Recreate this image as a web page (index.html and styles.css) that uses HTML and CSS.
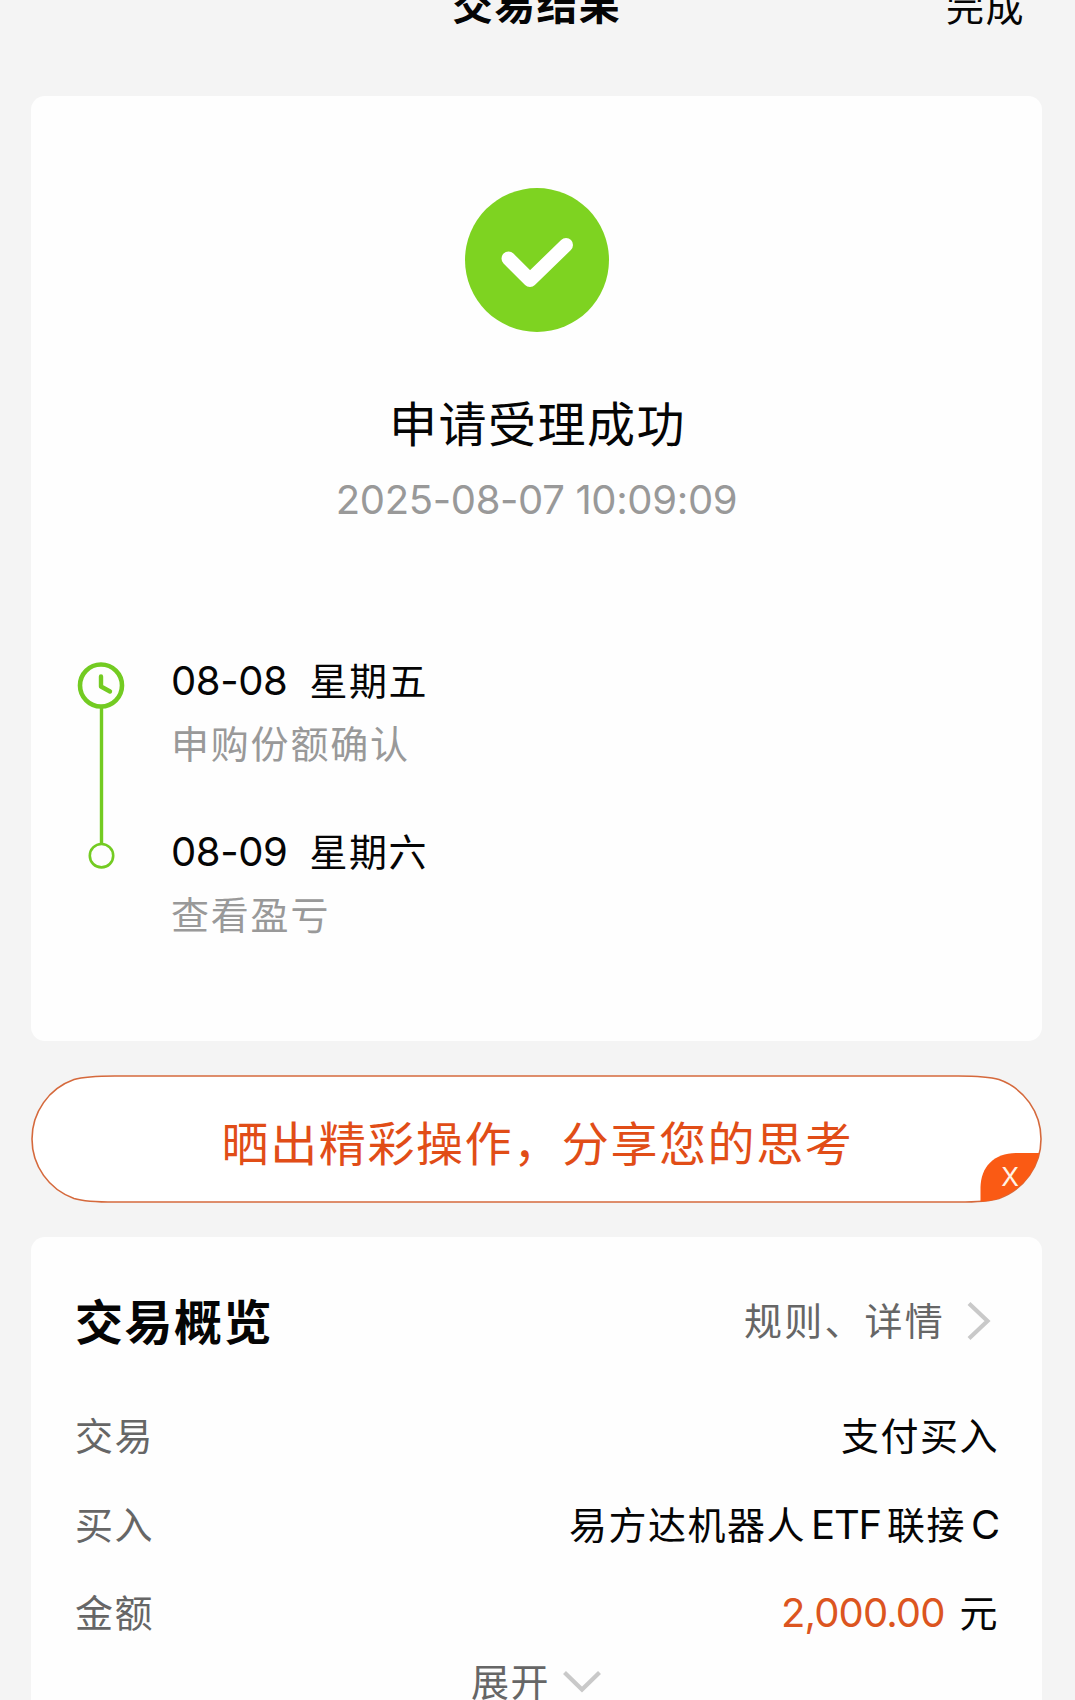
FILE: index.html
```html
<!doctype html><html lang="zh-CN">
<head><meta charset="utf-8"/><title>交易结果</title>
<meta name="viewport" content="width=device-width, initial-scale=1">
<link rel="stylesheet" href="styles.css">
</head>
<body>

<header class="nav">
	<h1>交易结果</h1>
	<a class="done">完成</a>
</header>

<section class="card result">
	<svg class="ok" width="144" height="144" viewBox="0 0 144 144">
		<circle cx="72" cy="72" r="72" fill="#7ed321"/>
		<path d="M43.5 70.5L65 92L101 57" fill="none" stroke="#fff" stroke-width="14" stroke-linecap="round" stroke-linejoin="round"/>
	</svg>
	<h2>申请受理成功</h2>
	<p class="time">2025-08-07 10:09:09</p>

	<div class="timeline">
		<svg class="axis" width="48" height="208" viewBox="0 0 48 208" fill="none" stroke="#73cb22">
			<circle cx="24" cy="23.5" r="21" stroke-width="4.6"/>
			<path d="M24 14.5V24.5L33 29.5" stroke-width="4.4" stroke-linecap="round" stroke-linejoin="round"/>
			<path d="M24.5 46V182" stroke-width="3.4"/>
			<circle cx="24.5" cy="193.7" r="11.7" stroke-width="2.6"/>
		</svg>
		<ul>
			<li>
				<p class="day"><span class="num">08-08</span>星期五</p>
				<p class="desc">申购份额确认</p>
			</li>
			<li>
				<p class="day"><span class="num">08-09</span>星期六</p>
				<p class="desc">查看盈亏</p>
			</li>
		</ul>
	</div>
</section>

<div class="share">
	<!-- 胶囊外框和右下角的关闭角标 -->
	<svg class="frame" width="1011" height="128" viewBox="0 0 1011 128">
		<defs><clipPath id="pill"><path id="outline" d="M1 64A63 63 0 0 1 43 4.6C54 1.2 66 1 84 1H927C945 1 957 1.2 968 4.6A63 63 0 0 1 968 123.4C957 126.8 945 127 927 127H84C66 127 54 126.8 43 123.4A63 63 0 0 1 1 64Z"/></clipPath></defs>
		<use href="#outline" fill="#fff" stroke="#d5693c" stroke-width="1.6"/>
		<path clip-path="url(#pill)" d="M949.5 128V113C949.5 92 963 78 985 78H1011V128Z" fill="#fa5a14"/>
	</svg>
	<span class="text">晒出精彩操作，分享您的思考</span>
	<span class="close">X</span>
</div>

<section class="card overview">
	<div class="head">
		<h3>交易概览</h3>
		<a class="more">规则、详情
			<svg width="24" height="40" viewBox="0 0 24 40"><path d="M2 2.5L20.5 20L2 37.5" fill="none" stroke="#c9c9c9" stroke-width="4.2"/></svg>
		</a>
	</div>
	<dl>
		<div class="row"><dt>交易</dt><dd>支付买入</dd></div>
		<div class="row"><dt>买入</dt><dd>易方达机器人<span class="en">ETF</span>联接<span class="en">C</span></dd></div>
		<div class="row"><dt>金额</dt><dd><span class="money">2,000.00</span>元</dd></div>
	</dl>
	<a class="expand">展开
		<svg width="38" height="22" viewBox="0 0 38 22"><path d="M1.5 1.5L19 18.5L36.5 1.5" fill="none" stroke="#c9c9c9" stroke-width="4.2"/></svg>
	</a>
</section>

</body></html>
```

FILE: styles.css
```css
* {box-sizing: border-box; margin: 0; padding: 0;}

html {height: 1700px; overflow: hidden;}
body {
	height: 1700px;
	overflow: hidden;
	padding: 0 33px 0 31px;
	background: #f4f4f4;
	color: #050505;
	font: 38px/50px Inter, "Noto Sans CJK SC", sans-serif;
	letter-spacing: 1.5px;
}
ul {list-style: none;}
svg {display: block; flex: none;}

/* 顶部标题栏（只露出下半截） */
.nav {
	display: grid;
	grid-template-columns: 1fr auto 1fr;
	align-items: center;
	height: 60px;
	margin: -25px 0 61px;
}
.nav h1 {
	grid-column: 2;
	font-size: 41px;
	font-weight: 600;
	letter-spacing: 1.3px;
}
.done {
	justify-self: end;
	padding: 3px 17px 0 0;
}

.card {
	background: #fefefe;
	border-radius: 14px;
}

/* 受理结果 */
.result {
	height: 945px;
	padding: 92px 46px 0;
}
.ok {margin: 0 auto;}
.result h2 {
	margin-top: 63px;
	font-size: 48px;
	font-weight: 400;
	line-height: 60px;
	letter-spacing: 1.5px;
	text-indent: 2px;
	text-align: center;
}
.time {
	margin-top: 20px;
	color: #999;
	font-size: 40px;
	letter-spacing: -.35px;
	text-align: center;
}

.timeline {
	display: flex;
	gap: 46px;
	margin-top: 131px;
}
.axis {margin-top: 6px;}
.timeline li {height: 171px;}
.num {
	margin-right: 22px;
	font-size: 40px;
	letter-spacing: -.4px;
}
.desc {
	margin-top: 13px;
	color: #999;
	letter-spacing: 1.8px;
}

/* 分享入口 */
.share {
	position: relative;
	display: flex;
	justify-content: center;
	align-items: center;
	height: 128px;
	margin: 34px 0;
}
.frame {
	position: absolute;
	left: 0;
	top: 0;
}
.share .text {
	position: relative;
	padding: 9px 0 0 2px;
	color: #e14d17;
	font-size: 47px;
	letter-spacing: 1.6px;
	white-space: nowrap;
}
.close {
	position: absolute;
	right: 23px;
	bottom: 11px;
	color: #fff3e6;
	font-size: 26px;
	font-weight: 400;
	line-height: 30px;
	letter-spacing: 0;
}

/* 交易概览 */
.overview {
	height: 500px;
	padding: 54px 43px 0 44px;
}
.head {
	display: flex;
	justify-content: space-between;
	align-items: center;
	height: 60px;
}
.head h3 {
	padding-top: 3px;
	font-size: 48px;
	font-weight: 700;
}
.more {
	display: flex;
	align-items: center;
	gap: 22px;
	padding-right: 8px;
	color: #666;
	letter-spacing: 2.2px;
}
dl {margin-top: 60px;}
.row {
	display: flex;
	justify-content: space-between;
	height: 88.5px;
}
dt {color: #666;}
.en {
	margin: 0 6px 0 5px;
	font-size: 40px;
	letter-spacing: -1.2px;
}
.en:last-child {margin-right: 0;}
.money {
	margin-right: 15px;
	color: #dc5520;
	font-size: 40px;
	letter-spacing: -.9px;
}
.expand {
	display: flex;
	justify-content: center;
	align-items: center;
	gap: 13px;
	padding-right: 2px;
	margin-top: -20px;
	color: #666;
}
```
